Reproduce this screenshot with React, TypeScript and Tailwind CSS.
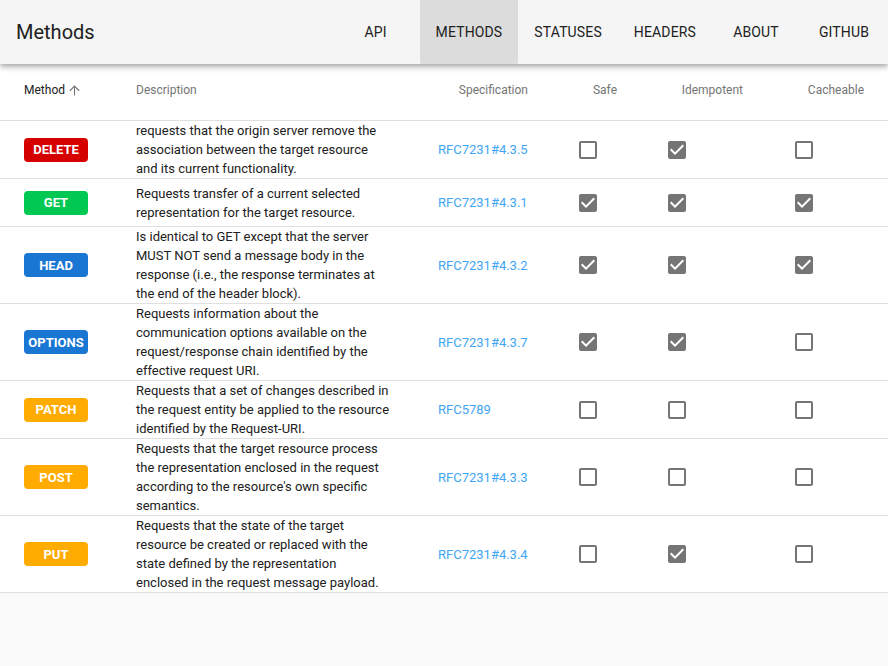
import { ArrowUp } from "lucide-react";

type Method = {
  name: string;
  color: string;
  description: string;
  spec: string;
  safe: boolean;
  idempotent: boolean;
  cacheable: boolean;
};

const methods: Method[] = [
  {
    name: "DELETE",
    color: "bg-[#d50000]",
    description:
      "requests that the origin server remove the association between the target resource and its current functionality.",
    spec: "RFC7231#4.3.5",
    safe: false,
    idempotent: true,
    cacheable: false,
  },
  {
    name: "GET",
    color: "bg-[#00c853]",
    description: "Requests transfer of a current selected representation for the target resource.",
    spec: "RFC7231#4.3.1",
    safe: true,
    idempotent: true,
    cacheable: true,
  },
  {
    name: "HEAD",
    color: "bg-[#1976d2]",
    description:
      "Is identical to GET except that the server MUST NOT send a message body in the response (i.e., the response terminates at the end of the header block).",
    spec: "RFC7231#4.3.2",
    safe: true,
    idempotent: true,
    cacheable: true,
  },
  {
    name: "OPTIONS",
    color: "bg-[#1976d2]",
    description:
      "Requests information about the communication options available on the request/response chain identified by the effective request URI.",
    spec: "RFC7231#4.3.7",
    safe: true,
    idempotent: true,
    cacheable: false,
  },
  {
    name: "PATCH",
    color: "bg-[#ffab00]",
    description:
      "Requests that a set of changes described in the request entity be applied to the resource identified by the Request-URI.",
    spec: "RFC5789",
    safe: false,
    idempotent: false,
    cacheable: false,
  },
  {
    name: "POST",
    color: "bg-[#ffab00]",
    description:
      "Requests that the target resource process the representation enclosed in the request according to the resource's own specific semantics.",
    spec: "RFC7231#4.3.3",
    safe: false,
    idempotent: false,
    cacheable: false,
  },
  {
    name: "PUT",
    color: "bg-[#ffab00]",
    description:
      "Requests that the state of the target resource be created or replaced with the state defined by the representation enclosed in the request message payload.",
    spec: "RFC7231#4.3.4",
    safe: false,
    idempotent: true,
    cacheable: false,
  },
];

const tabs = ["API", "METHODS", "STATUSES", "HEADERS", "ABOUT", "GITHUB"];

const cols = "grid grid-cols-[136px_302px_90px_89px_126px_121px_24px]";

function Check({ on }: { on: boolean }) {
  return (
    <svg width="24" height="24" viewBox="0 0 24 24" className="fill-[#757575]">
      {on ? (
        <path d="M19 3H5c-1.11 0-2 .9-2 2v14c0 1.1.89 2 2 2h14c1.11 0 2-.9 2-2V5c0-1.1-.89-2-2-2zm-9 14l-5-5 1.41-1.41L10 14.17l7.59-7.59L19 8l-9 9z" />
      ) : (
        <path d="M19 5v14H5V5h14m0-2H5c-1.1 0-2 .9-2 2v14c0 1.1.9 2 2 2h14c1.1 0 2-.9 2-2V5c0-1.1-.9-2-2-2z" />
      )}
    </svg>
  );
}

export default function App() {
  return (
    <div className="min-h-screen bg-[#fafafa] font-['Roboto',sans-serif] text-[#212121]">
      {/* barra superior */}
      <header className="relative z-10 flex h-16 items-center bg-[#f5f5f5] pl-4 shadow-[0_2px_4px_-1px_rgba(0,0,0,0.2),0_4px_5px_0_rgba(0,0,0,0.14),0_1px_10px_0_rgba(0,0,0,0.12)]">
        <h1 className="flex-1 text-[20px] leading-none">Methods</h1>
        <nav className="flex h-full">
          {tabs.map((t) => (
            <div
              key={t}
              className={`flex h-full min-w-[88px] items-center justify-center px-4 text-[14px] tracking-[0.01em] ${
                t === "METHODS" ? "rounded-b-[2px] bg-[#dcdcdc]" : ""
              }`}
            >
              {t}
            </div>
          ))}
        </nav>
      </header>

      <div className="bg-white">
        <div className={`${cols} h-[57px] items-center border-b border-[#e0e0e0] pb-1 text-[12px] text-[#757575]`}>
          <div className="flex items-center gap-[2px] pl-6 text-[#212121]">
            Method
            <ArrowUp size={15} strokeWidth={1.75} className="text-[#757575]" />
          </div>
          <div>Description</div>
          <div className="text-right">Specification</div>
          <div className="text-right">Safe</div>
          <div className="text-right">Idempotent</div>
          <div className="text-right">Cacheable</div>
          <div />
        </div>

        {methods.map((m) => (
          <div
            key={m.name}
            className={`${cols} min-h-[48px] items-center border-b border-[#e0e0e0] text-[13px] leading-[19px]`}
          >
            <div className="pl-6">
              <span
                className={`flex h-6 w-16 items-center justify-center rounded-[4px] text-[13px] font-bold text-white ${m.color}`}
              >
                {m.name}
              </span>
            </div>
            <div className="pr-[48px]">{m.description}</div>
            <div className="text-[#42a5f5]">{m.spec}</div>
            <div className="flex justify-end pr-[17px]">
              <Check on={m.safe} />
            </div>
            <div className="flex justify-end pr-[54px]">
              <Check on={m.idempotent} />
            </div>
            <div className="flex justify-end pr-[48px]">
              <Check on={m.cacheable} />
            </div>
            <div />
          </div>
        ))}
      </div>
    </div>
  );
}
